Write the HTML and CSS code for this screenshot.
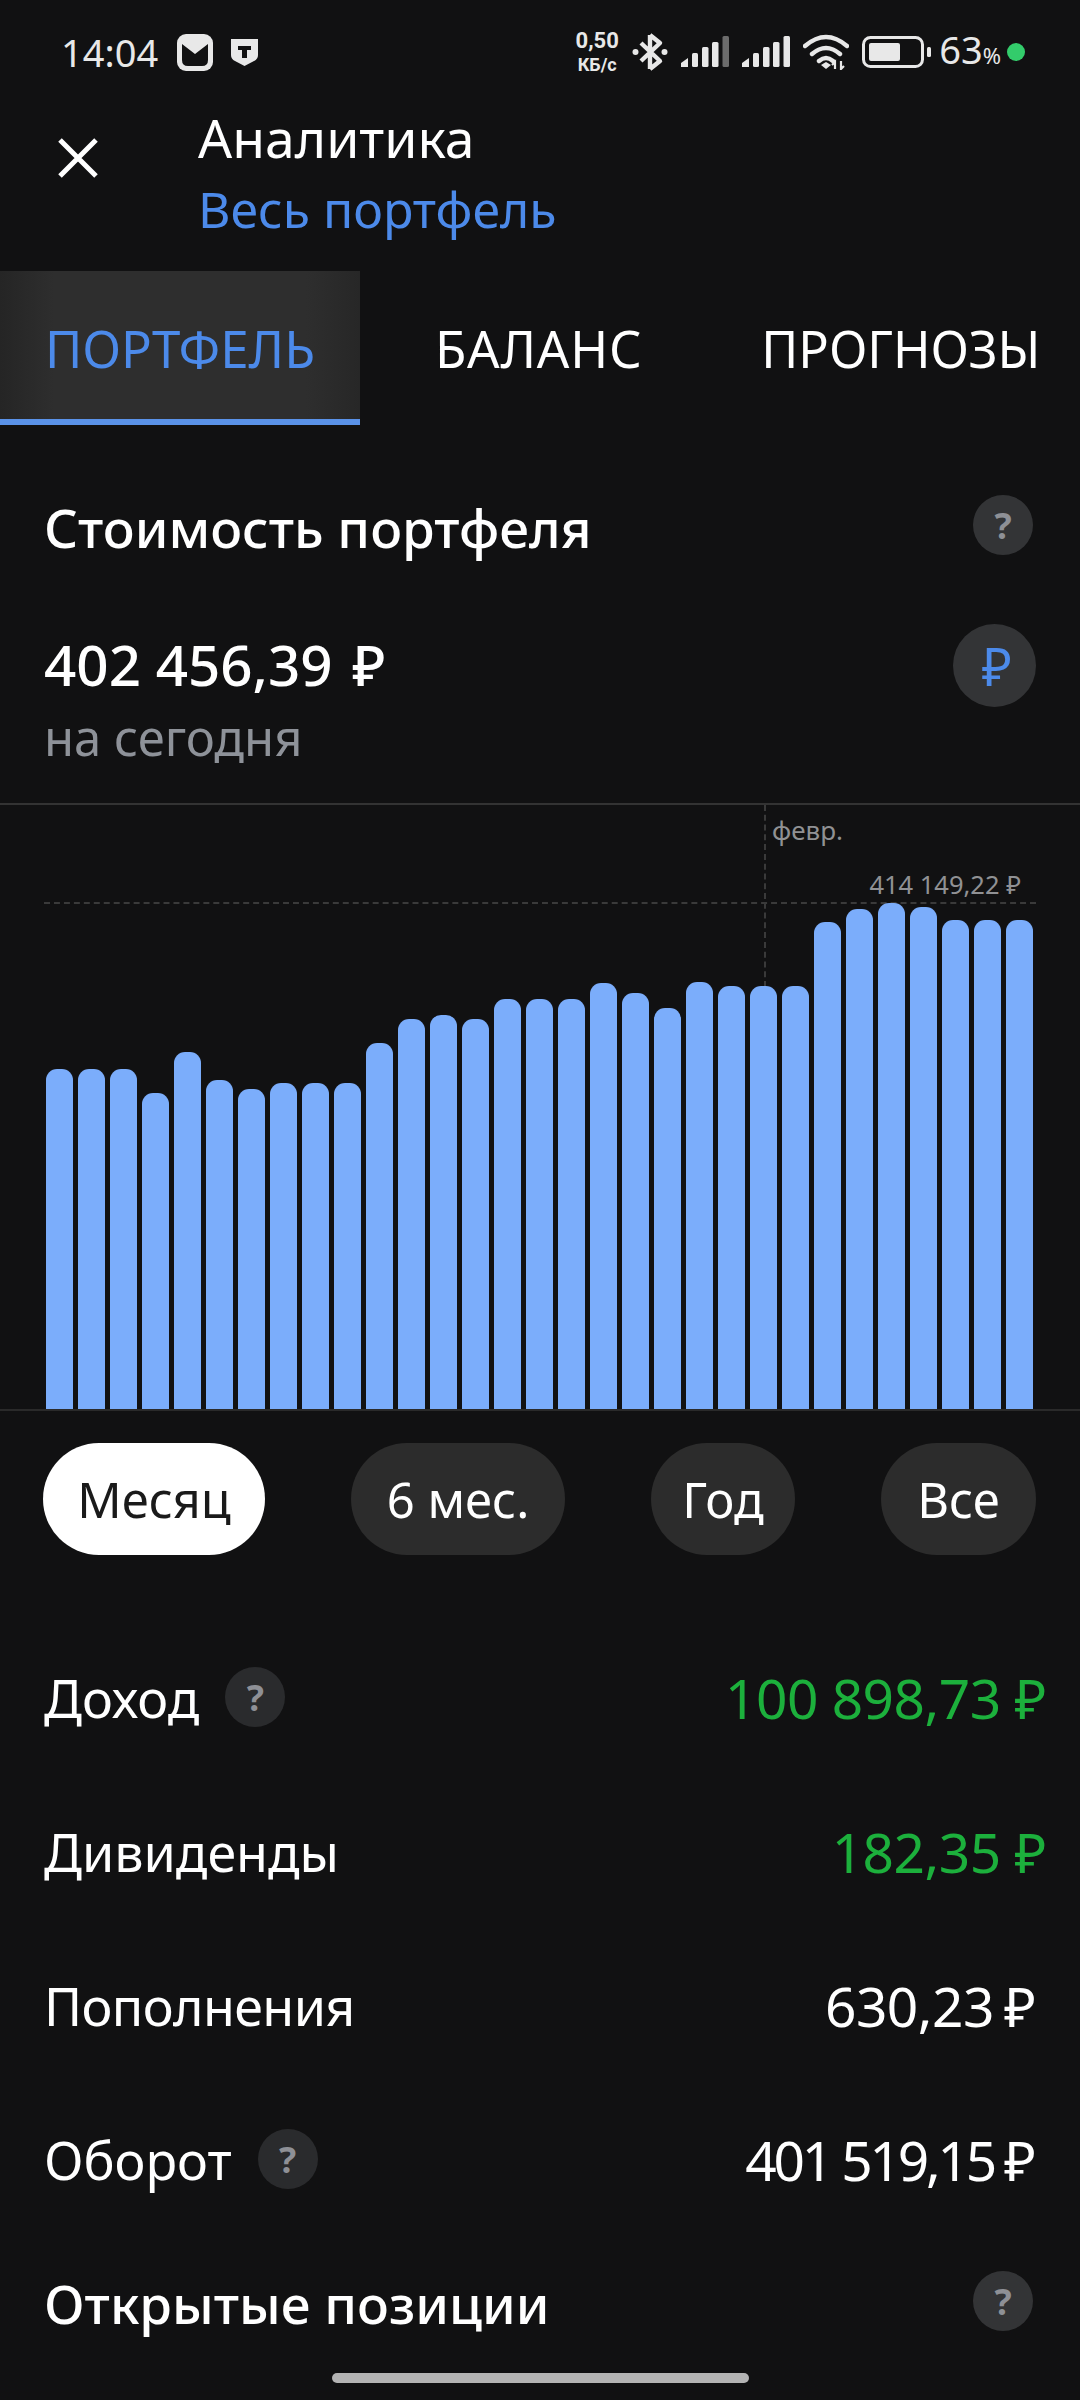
FILE: index.html
```html
<!DOCTYPE html>
<html>
  <head>
    <meta charset="utf-8" />
    <link rel="stylesheet" href="styles.css">
  </head>

  <body class="app-body">
    <div class="status-bar">
      <div class="status-left">
        <span class="status-time">14:04</span>
        <svg class="status-mail" width="36" height="37" viewBox="0 0 36 37">
          <rect x="0" y="0" width="36" height="37" rx="9" fill="#e8e8e8" />
          <path d="M5 10 L18 20 L31 10 V26 Q31 32 25 32 H11 Q5 32 5 26 Z" fill="#111112" />
        </svg>
        <svg class="status-shield" width="27" height="28" viewBox="0 0 27 28">
          <path d="M0 1 H27 V17 Q27 21 23 23 L13.5 28 L4 23 Q0 21 0 17 Z" fill="#e8e8e8" />
          <path d="M7 8 H20 V12 H16 V20 H11 V12 H7 Z" fill="#111112" />
        </svg>
      </div>
      <div class="status-right">
        <div class="status-speed">
          <span class="status-speed-value">0,50</span>
          <span class="status-speed-unit">КБ/с</span>
        </div>
        <svg class="status-bt" width="36" height="40" viewBox="0 0 36 40">
          <path d="M18 3 L28 11 L9 29 M18 37 L28 29 L9 11 M18 3 V37" fill="none" stroke="#e8e8e8" stroke-width="4.4" stroke-linejoin="round" />
          <circle cx="3.5" cy="20" r="3" fill="#e8e8e8" />
          <circle cx="32.5" cy="20" r="3" fill="#e8e8e8" />
        </svg>
        <svg class="status-signal" width="48" height="32" viewBox="0 0 48 32">
          <path d="M0 31 V27 L7 22 V31 Z" fill="#e8e8e8" />
          <rect x="11" y="17" width="6" height="14" rx="1.5" fill="#e8e8e8" />
          <rect x="21" y="11" width="6.5" height="20" rx="1.5" fill="#e8e8e8" />
          <rect x="31" y="6" width="6.5" height="25" rx="1.5" fill="#e8e8e8" />
          <rect x="41.5" y="0" width="6.5" height="31" rx="1.5" fill="#6c6c6c" />
        </svg>
        <svg class="status-signal" width="48" height="32" viewBox="0 0 48 32">
          <path d="M0 31 V27 L7 22 V31 Z" fill="#e8e8e8" />
          <rect x="11" y="17" width="6" height="14" rx="1.5" fill="#e8e8e8" />
          <rect x="21" y="11" width="6.5" height="20" rx="1.5" fill="#e8e8e8" />
          <rect x="31" y="6" width="6.5" height="25" rx="1.5" fill="#e8e8e8" />
          <rect x="41.5" y="0" width="6.5" height="31" rx="1.5" fill="#e8e8e8" />
        </svg>
        <svg class="status-wifi" width="46" height="36" viewBox="0 0 46 36">
          <path d="M2 12 Q23 -6 44 12 M9 20 Q23 8 37 20 M16 27 Q23 21 30 27" fill="none" stroke="#e8e8e8" stroke-width="4.4" stroke-linecap="round" />
          <path d="M18 31 L23 28 L28 31 L23 35 Z" fill="#e8e8e8" />
          <path d="M32 35 V28 L29 31 M38 27 V35 L41 32" fill="none" stroke="#e8e8e8" stroke-width="2.2" />
        </svg>
        <svg class="status-battery" width="69" height="32" viewBox="0 0 69 32">
          <rect x="1.5" y="1.5" width="59" height="29" rx="7" fill="none" stroke="#e8e8e8" stroke-width="3" />
          <rect x="7" y="7" width="31" height="18" rx="2" fill="#e8e8e8" />
          <rect x="65" y="11" width="4" height="10" rx="1.5" fill="#e8e8e8" />
        </svg>
        <span class="status-level">63<small>%</small></span>
        <span class="status-dot"></span>
      </div>
    </div>

    <header class="top-bar">
      <svg class="top-bar-close" width="40" height="40" viewBox="0 0 40 40">
        <path d="M2 2 L38 38 M38 2 L2 38" stroke="#fff" stroke-width="5" />
      </svg>
      <div class="top-bar-titles">
        <div class="top-bar-title">Аналитика</div>
        <div class="top-bar-subtitle">Весь портфель</div>
      </div>
    </header>

    <nav class="tabs">
      <div class="tab tab-active">ПОРТФЕЛЬ</div>
      <div class="tab tab-balance">БАЛАНС</div>
      <div class="tab tab-forecast">ПРОГНОЗЫ</div>
    </nav>

    <section class="value-section">
      <div class="section-head">
        <h2 class="section-title">Стоимость портфеля</h2>
        <span class="help help-large">?</span>
      </div>
      <div class="value-row">
        <div>
          <div class="value-amount">402 456,39 <span class="value-currency">₽</span></div>
          <div class="value-caption">на сегодня</div>
        </div>
        <span class="currency-button">₽</span>
      </div>
    </section>

    <section class="chart">
      <div class="chart-month-line"></div>
      <div class="chart-month">февр.</div>
      <div class="chart-max-line"></div>
      <div class="chart-max">414 149,22 ₽</div>
      <div class="chart-bars">
        <div class="bar" style="height: 340px"></div>
        <div class="bar" style="height: 340px"></div>
        <div class="bar" style="height: 340px"></div>
        <div class="bar" style="height: 316px"></div>
        <div class="bar" style="height: 357px"></div>
        <div class="bar" style="height: 329px"></div>
        <div class="bar" style="height: 320px"></div>
        <div class="bar" style="height: 326px"></div>
        <div class="bar" style="height: 326px"></div>
        <div class="bar" style="height: 326px"></div>
        <div class="bar" style="height: 366px"></div>
        <div class="bar" style="height: 390px"></div>
        <div class="bar" style="height: 394px"></div>
        <div class="bar" style="height: 390px"></div>
        <div class="bar" style="height: 410px"></div>
        <div class="bar" style="height: 410px"></div>
        <div class="bar" style="height: 410px"></div>
        <div class="bar" style="height: 426px"></div>
        <div class="bar" style="height: 416px"></div>
        <div class="bar" style="height: 401px"></div>
        <div class="bar" style="height: 427px"></div>
        <div class="bar" style="height: 423px"></div>
        <div class="bar" style="height: 423px"></div>
        <div class="bar" style="height: 423px"></div>
        <div class="bar" style="height: 487px"></div>
        <div class="bar" style="height: 500px"></div>
        <div class="bar" style="height: 506px"></div>
        <div class="bar" style="height: 502px"></div>
        <div class="bar" style="height: 489px"></div>
        <div class="bar" style="height: 489px"></div>
        <div class="bar" style="height: 489px"></div>
      </div>
    </section>

    <div class="periods">
      <div class="period period-month">Месяц</div>
      <div class="period period-half">6 мес.</div>
      <div class="period period-year">Год</div>
      <div class="period period-all">Все</div>
    </div>

    <section class="stats">
      <div class="stat-row">
        <div class="stat-label">Доход <span class="help">?</span></div>
        <div class="stat-value stat-value-green">100 898,73 ₽</div>
      </div>
      <div class="stat-row">
        <div class="stat-label">Дивиденды</div>
        <div class="stat-value stat-value-green">182,35 ₽</div>
      </div>
      <div class="stat-row">
        <div class="stat-label stat-label-tight">Пополнения</div>
        <div class="stat-value">630,23<span class="stat-currency">₽</span></div>
      </div>
      <div class="stat-row">
        <div class="stat-label">Оборот <span class="help">?</span></div>
        <div class="stat-value stat-value-tight">401 519,15<span class="stat-currency">₽</span></div>
      </div>
    </section>

    <div class="section-head positions-head">
      <h2 class="section-title">Открытые позиции</h2>
      <span class="help help-large">?</span>
    </div>

    <div class="home-indicator"></div>
  </body>
</html>
```

FILE: styles.css
```css
:root {
  --bg: #111112;
  --blue: #4c8aea;
  --font: 'Noto Sans', Roboto, sans-serif;
}

html,
body {
  margin: 0;
  padding: 0;
}

.app-body {
  position: relative;
  width: 1080px;
  height: 2400px;
  overflow: hidden;
  background: var(--bg);
  color: #fff;
  font-family: var(--font);
}

/* status bar */
.status-bar {
  display: flex;
  justify-content: space-between;
  align-items: center;
  height: 104px;
  padding: 0 55px 0 61px;
  box-sizing: border-box;
  color: #e8e8e8;
}

.status-left,
.status-right {
  display: flex;
  align-items: center;
}

.status-time {
  font-size: 38px;
  margin-right: 19px;
}

.status-mail {
  margin-right: 18px;
}

.status-right {
  gap: 13px;
}

.status-speed {
  display: flex;
  flex-direction: column;
  align-items: center;
  width: 44px;
  font-family: Roboto, sans-serif;
  font-weight: 700;
  white-space: nowrap;
}

.status-speed-value {
  font-size: 22px;
  line-height: 26px;
  margin-top: -2px;
}

.status-speed-unit {
  font-size: 18px;
  line-height: 21px;
}

.status-level {
  margin-left: -5px;
  font-size: 38px;
  line-height: 40px;
}

.status-level small {
  font-size: 22px;
}

.status-dot {
  width: 18px;
  height: 18px;
  margin-left: -7px;
  border-radius: 50%;
  background: #33cc6b;
}

/* header */
.top-bar {
  display: flex;
  height: 167px;
}

.top-bar-close {
  margin: 34px 0 0 58px;
}

.top-bar-titles {
  margin-left: 100px;
}

.top-bar-title {
  font-size: 53.5px;
  line-height: 64px;
  margin-top: 2px;
}

.top-bar-subtitle {
  font-size: 50px;
  line-height: 64px;
  color: var(--blue);
  margin-top: 7px;
}

/* tabs */
.tabs {
  display: flex;
  height: 154px;
}

.tab {
  display: flex;
  align-items: center;
  font-size: 51px;
  box-sizing: border-box;
}

.tab-active {
  width: 360px;
  justify-content: center;
  padding-top: 6px;
  color: var(--blue);
  background: linear-gradient(90deg, #252525, #2e2e2e 15%, #2e2e2e 85%, #272727);
  border-bottom: 6px solid #5a92e8;
}

.tab-balance {
  margin-left: 75px;
  letter-spacing: 0.8px;
}

.tab-forecast {
  margin-left: 119px;
  font-size: 50.5px;
}

/* value */
.value-section {
  height: 378px;
  padding: 70px 44px 0;
  box-sizing: border-box;
}

.section-head {
  display: flex;
  justify-content: space-between;
  align-items: center;
  height: 60px;
}

.section-title {
  margin: 5px 0 0;
  font-size: 53px;
  font-weight: 500;
  line-height: 60px;
}

.help {
  display: inline-flex;
  align-items: center;
  justify-content: center;
  width: 60px;
  height: 60px;
  border-radius: 50%;
  background: #2a2b2d;
  color: #8e9096;
  font-size: 36px;
  font-weight: 700;
}

.help-large {
  margin-right: 3px;
  background: #333436;
}

.value-row {
  display: flex;
  justify-content: space-between;
  align-items: flex-start;
  margin-top: 75px;
}

.value-amount {
  font-size: 56.5px;
  font-weight: 500;
  line-height: 70px;
}

.value-currency {
  margin-left: 5px;
}

.value-caption {
  margin-top: 7px;
  font-size: 49px;
  line-height: 60px;
  color: #8e9299;
}

.currency-button {
  display: flex;
  align-items: center;
  justify-content: center;
  width: 83px;
  height: 83px;
  margin-top: -6px;
  padding-left: 5px;
  box-sizing: border-box;
  border-radius: 50%;
  background: #333436;
  color: var(--blue);
  font-size: 52px;
}

/* chart */
.chart {
  position: relative;
  height: 608px;
  border-top: 2px solid #333;
  border-bottom: 2px solid #2a2a2a;
  box-sizing: border-box;
}

.chart-bars {
  position: absolute;
  left: 46px;
  bottom: 0;
  display: flex;
  align-items: flex-end;
  gap: 5px;
}

.bar {
  width: 27px;
  border-radius: 11px 11px 0 0;
  background: #7badfb;
}

.chart-month-line {
  position: absolute;
  left: 764px;
  top: 0;
  height: 182px;
  border-left: 2px dashed #3a3a3a;
}

.chart-month {
  position: absolute;
  left: 772px;
  top: 7px;
  font-size: 26px;
  color: #909194;
}

.chart-max-line {
  position: absolute;
  left: 44px;
  width: 992px;
  top: 97px;
  border-top: 2px dashed #3a3a3a;
}

.chart-max {
  position: absolute;
  right: 59px;
  top: 62px;
  font-size: 25.5px;
  color: #909194;
}

/* periods */
.periods {
  display: flex;
  justify-content: space-between;
  padding: 32px 44px 0 43px;
}

.period {
  display: flex;
  align-items: center;
  justify-content: center;
  height: 112px;
  border-radius: 56px;
  background: #2c2c2c;
  font-size: 49px;
}

.period-month {
  width: 222px;
  background: #fff;
  color: #1a1a1a;
}

.period-half {
  width: 214px;
}

.period-year {
  width: 144px;
}

.period-all {
  width: 155px;
}

/* stats */
.stats {
  margin-top: 65px;
  padding: 0 44px;
}

.stat-row {
  display: flex;
  justify-content: space-between;
  align-items: center;
  height: 154px;
}

.stat-label {
  display: flex;
  align-items: center;
  gap: 26px;
  font-size: 52px;
}

.stat-label-tight {
  letter-spacing: -0.6px;
}

.stat-value {
  font-size: 55px;
  letter-spacing: -0.5px;
}

.stat-value-tight {
  letter-spacing: -3.2px;
}

.stat-currency {
  margin-left: 10px;
  letter-spacing: 0;
}

.stat-value-green {
  margin-right: -10px;
  color: #1cb03c;
}

.positions-head {
  margin-top: 35px;
  padding: 0 44px;
}

.home-indicator {
  position: absolute;
  left: 332px;
  bottom: 17px;
  width: 417px;
  height: 10px;
  border-radius: 5px;
  background: #b4b4b4;
}
```
